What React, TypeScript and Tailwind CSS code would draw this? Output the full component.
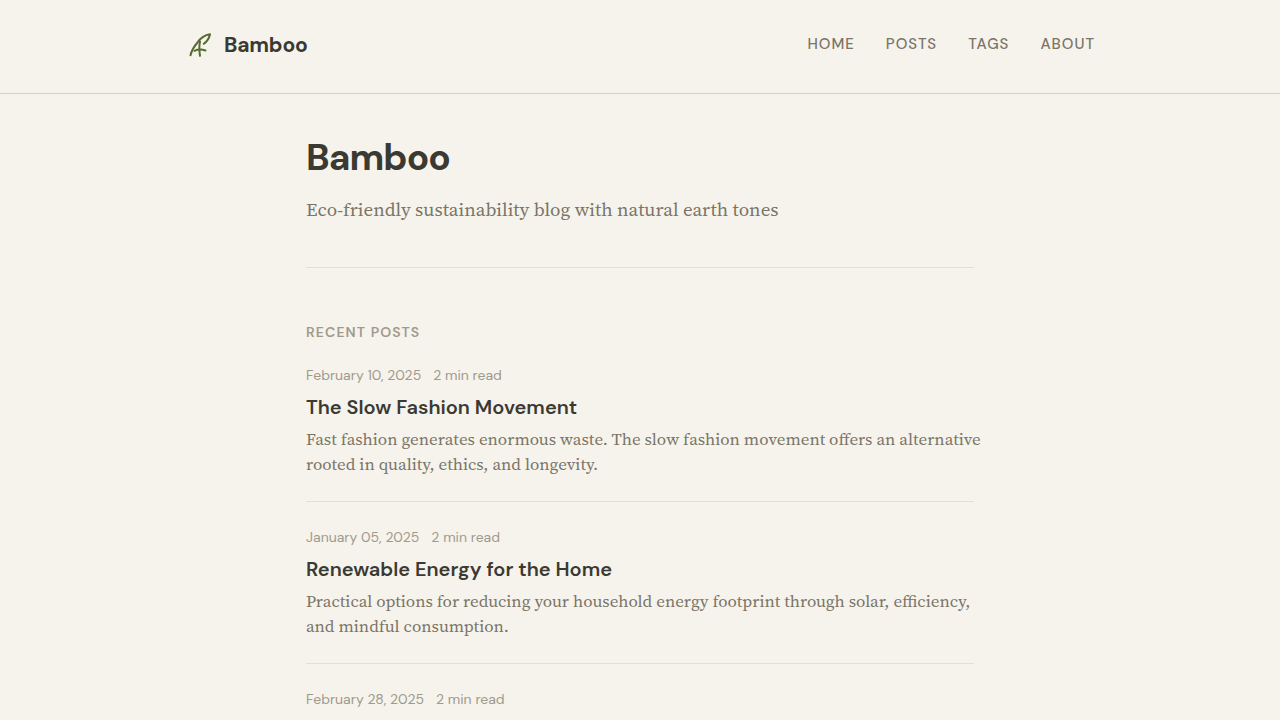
const posts = [
  {
    date: 'February 10, 2025',
    title: 'The Slow Fashion Movement',
    summary:
      'Fast fashion generates enormous waste. The slow fashion movement offers an alternative rooted in quality, ethics, and longevity.',
  },
  {
    date: 'January 05, 2025',
    title: 'Renewable Energy for the Home',
    summary:
      'Practical options for reducing your household energy footprint through solar, efficiency, and mindful consumption.',
  },
  { date: 'February 28, 2025', title: '', summary: '' },
];

const links = ['Home', 'Posts', 'Tags', 'About'];

function LeafMark() {
  return (
    <svg
      className="size-7"
      viewBox="0 0 28 28"
      fill="none"
      stroke="#556b2f"
      strokeWidth="2"
      strokeLinecap="round"
      strokeLinejoin="round"
      aria-hidden="true"
    >
      <path d="M5.500 24.300C6.500 20 9 15.500 12.500 11.500C15.500 7 20 3.800 25 3.200C24.200 7 22 10.500 18.800 12.800" />
      <path d="M15 10.500C14.200 14 14.300 20 15 24.800" />
      <path d="M9.500 19.800C12.500 18.300 17 18.300 20.500 19.500" />
    </svg>
  );
}

export default function App() {
  return (
    <div className="h-screen overflow-hidden bg-[#f6f3ec] font-['DM_Sans',Inter,sans-serif] text-[#3a3a32]">
      <header className="border-b border-[#d4d0c4] px-6">
        <div className="mx-auto flex h-[93px] max-w-[910px] items-center justify-between pb-1">
          <a href="#home" className="flex items-center gap-[11px] text-[21px] leading-8 font-bold tracking-[-0.01em]">
            <LeafMark />
            Bamboo
          </a>
          <nav className="flex gap-[31px] text-[15px] font-medium tracking-[1px] text-[#7a7568] uppercase">
            {links.map((link) => (
              <a key={link} href={'#' + link.toLowerCase()}>
                {link}
              </a>
            ))}
          </nav>
        </div>
      </header>
      <main className="mx-auto max-w-[668px] pt-[39px]">
        <section className="border-b border-[#e2dfd5] pb-[42px]">
          <h1 className="text-[37px] leading-12 font-bold tracking-tight">Bamboo</h1>
          <p className="mt-3 font-['Source_Serif_4','Liberation_Serif',serif] text-[19px] leading-8 text-[#7a7568]">
            Eco-friendly sustainability blog with natural earth tones
          </p>
        </section>
        <section className="pt-13">
          <h2 className="text-[14px] leading-6 font-semibold tracking-[0.08em] text-[#a09a8c] uppercase">
            Recent Posts
          </h2>
          {posts.map((post) => (
            <article key={post.date} className="mb-[23px] border-b border-[#e2dfd5] pb-6 first-of-type:mt-[19px]">
              <p className="flex gap-3 text-[14px] leading-6 text-[#a09a8c]">
                <time>{post.date}</time>
                <span>2 min read</span>
              </p>
              {post.title && (
                <>
                  <h3 className="mt-1 text-[20px] leading-8 font-semibold">
                    <a href="#post">{post.title}</a>
                  </h3>
                  <p className="mt-1 -mr-3 font-['Source_Serif_4','Liberation_Serif',serif] text-[17px] leading-[25px] text-[#7a7568]">
                    {post.summary}
                  </p>
                </>
              )}
            </article>
          ))}
        </section>
      </main>
    </div>
  );
}
